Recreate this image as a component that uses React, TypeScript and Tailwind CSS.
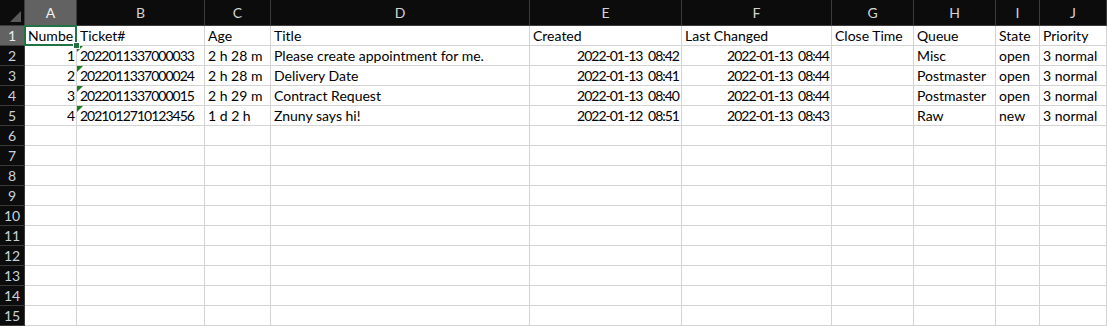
import React from "react";

const cols = ["A", "B", "C", "D", "E", "F", "G", "H", "I", "J"];

type Cell = { v: string; right?: boolean; flag?: boolean; num?: boolean };

const t = (v: string, flag = false): Cell => ({ v, flag, num: true });
const d = (v: string): Cell => ({ v, right: true, num: true });
const s = (v: string): Cell => ({ v });

const data: Cell[][] = [
  [s("Numbe"), s("Ticket#"), s("Age"), s("Title"), s("Created"), s("Last Changed"), s("Close Time"), s("Queue"), s("State"), s("Priority")],
  [d("1"), t("2022011337000033", true), s("2 h 28 m"), s("Please create appointment for me."), d("2022-01-13 08:42"), d("2022-01-13 08:44"), s(""), s("Misc"), s("open"), s("3 normal")],
  [d("2"), t("2022011337000024", true), s("2 h 28 m"), s("Delivery Date"), d("2022-01-13 08:41"), d("2022-01-13 08:44"), s(""), s("Postmaster"), s("open"), s("3 normal")],
  [d("3"), t("2022011337000015", true), s("2 h 29 m"), s("Contract Request"), d("2022-01-13 08:40"), d("2022-01-13 08:44"), s(""), s("Postmaster"), s("open"), s("3 normal")],
  [d("4"), t("2021012710123456", true), s("1 d 2 h"), s("Znuny says hi!"), d("2022-01-12 08:51"), d("2022-01-13 08:43"), s(""), s("Raw"), s("new"), s("3 normal")],
];

const rows = Array.from({ length: 15 }, (_, i) => data[i] ?? cols.map(() => s("")));

export default function App() {
  return (
    <div
      className="w-[1107px] h-[326px] overflow-hidden bg-white text-[14px] text-black"
      style={{ fontFamily: "Lato, 'Noto Sans', sans-serif" }}
    >
      <div className="grid grid-cols-[25px_52px_128px_66px_259px_152px_150px_82px_82px_44px_1fr] grid-rows-[26px_repeat(15,20px)]">
        {/* corner */}
        <div className="relative bg-[#0c0c0c] border-r border-b border-[#3c3c3c]">
          <div className="absolute right-[3px] bottom-[3px] w-0 h-0 border-l-[11px] border-l-transparent border-b-[11px] border-b-[#5a5a5a]" />
        </div>
        {cols.map((c, i) => (
          <div
            key={c}
            className={
              i === 0
                ? "flex items-end justify-center pb-[2px] bg-[#626262] text-[#f0f0f0] border-r border-b border-[#3c3c3c]"
                : "flex items-end justify-center pb-[2px] bg-[#0c0c0c] text-[#d4d4d4] border-r border-b border-[#3c3c3c]"
            }
          >
            {c}
          </div>
        ))}
        {rows.map((r, ri) => (
          <React.Fragment key={ri}>
            <div
              className={
                ri === 0
                  ? "flex items-center justify-center bg-[#626262] text-[#e8eef5] border-r border-b border-[#3c3c3c]"
                  : "flex items-center justify-center bg-[#0c0c0c] text-[#c9d2dc] border-r border-b border-[#3a3a3a]"
              }
            >
              {ri + 1}
            </div>
            {r.map((cell, ci) => (
              <div
                key={ci}
                className={`relative flex items-center whitespace-pre border-r border-b border-[#d4d4d4] pl-[3px] pr-[2px] leading-none ${cell.right ? "justify-end" : ""} ${cell.num ? "tracking-[-1px] [word-spacing:3px]" : ""}`}
              >
                {cell.flag && (
                  <div className="absolute left-0 top-0 w-0 h-0 border-r-[6px] border-r-transparent border-t-[6px] border-t-[#1e7a1e]" />
                )}
                {cell.v}
                {ri === 0 && ci === 0 && (
                  <>
                    <div className="absolute -left-[1px] -top-[1px] w-[53px] h-[21px] border-2 border-[#217346] pointer-events-none" />
                    <div className="absolute -right-[4px] -bottom-[4px] w-[7px] h-[7px] bg-[#217346] border border-white z-10" />
                  </>
                )}
              </div>
            ))}
          </React.Fragment>
        ))}
      </div>
    </div>
  );
}
